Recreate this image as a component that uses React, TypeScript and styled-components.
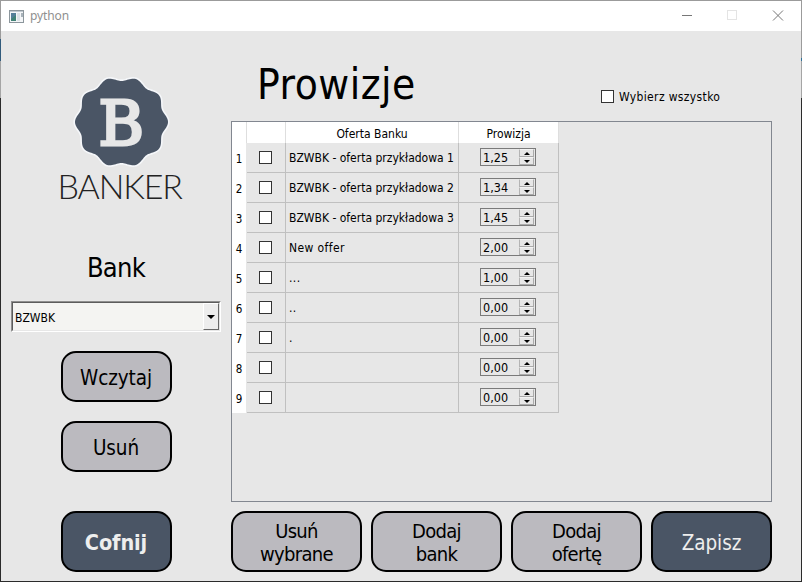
import React from "react";
import styled, { createGlobalStyle, css } from "styled-components";

const GlobalStyle = createGlobalStyle`
  * { box-sizing: border-box; }
  html, body { margin: 0; padding: 0; }
  body {
    font-family: "DejaVu Sans Condensed", "DejaVu Sans", sans-serif;
    font-stretch: condensed;
    font-size: 12px;
    color: #000;
    overflow: hidden;
  }
`;

const Frame = styled.div`
  display: grid;
  grid-template-columns: 1px 800px 1px;
  grid-template-rows: 1px 580px 1px;
  width: 802px;
  height: 582px;
  background: #2b2b2b;
`;

const TopEdge = styled.div`
  grid-column: 1 / 4;
  background: #9b9b9b;
`;

const Edge = styled.div<{ $fill: string }>`
  background: ${(p) => p.$fill};
`;

const Window = styled.div`
  display: flex;
  flex-direction: column;
  background: #e7e7e7;
`;

const TitleBar = styled.header`
  display: flex;
  align-items: center;
  height: 30px;
  padding: 0 17px 0 8px;
  background: #fff;
`;

const Title = styled.span`
  flex: 1;
  margin-left: 6px;
  font: 12px/16px "Noto Sans", sans-serif;
  letter-spacing: -0.1px;
  color: #909090;
`;

const Controls = styled.div`
  display: flex;
  gap: 34px;
`;

const Body = styled.main`
  display: flex;
  gap: 10px;
  flex: 1;
  padding-left: 10px;
`;

const Sidebar = styled.aside`
  display: flex;
  flex-direction: column;
  align-items: center;
  width: 210px;
`;

const LogoDrawing = styled.svg`
  display: block;
  width: 130px;
  height: 134px;
  margin: 40px 0 0 10px;
`;

const BankHeading = styled.h2`
  margin: 46px 0 0;
  height: 34px;
  font-size: 27px;
  line-height: 34px;
  font-weight: 400;
  letter-spacing: -0.7px;
`;

const Combo = styled.div`
  display: flex;
  width: 210px;
  height: 31px;
  margin-top: 16px;
  border: 1px solid;
  border-color: #8f8f8f #fff #fff #8f8f8f;
  background: #f4f4f2;
`;

const ComboInner = styled.div`
  display: flex;
  flex: 1;
  border: 1px solid;
  border-color: #5c5c5c #e3e3e3 #e7e7e7 #5c5c5c;
`;

const ComboText = styled.span`
  flex: 1;
  padding: 1px 2px 0;
  line-height: 28px;
`;

const ComboArrow = styled.span`
  display: flex;
  align-items: center;
  justify-content: center;
  width: 16px;
  border: 1px solid;
  border-color: #fff #686868 #686868 #fff;
  background: #ededed;
`;

const PushButton = styled.button<{ $w: number; $h: number; $dark?: boolean; $bold?: boolean; $double?: boolean; $top?: number }>`
  display: flex;
  align-items: center;
  justify-content: center;
  flex: none;
  width: ${(p) => p.$w}px;
  height: ${(p) => p.$h}px;
  margin: ${(p) => p.$top ?? 0}px 0 0;
  padding: 3px 0 0;
  border: 2px solid #000;
  border-radius: 15px;
  background: #bbbabf;
  color: #000;
  font: inherit;
  font-size: 20.5px;
  font-stretch: condensed;
  line-height: 23px;
  letter-spacing: -0.1px;
  white-space: pre-line;
  ${(p) => p.$double && css`font-size: 20px; letter-spacing: -0.7px;`}
  ${(p) => p.$dark && css`background: #4a5565; color: #eee;`}
  ${(p) => p.$bold && css`font-weight: 700; font-size: 21.5px; padding-top: 1px;`}
`;

const Content = styled.section`
  display: flex;
  flex-direction: column;
  width: 541px;
`;

const TopRow = styled.div`
  display: flex;
  height: 90px;
`;

const PageTitle = styled.h1`
  width: 370px;
  margin: 0;
  padding: 27px 0 0 26px;
  font-size: 42px;
  line-height: 54px;
  font-weight: 400;
  letter-spacing: 0.5px;
`;

const SelectAll = styled.label`
  display: flex;
  align-items: center;
  gap: 5px;
  height: 17px;
  margin-top: 57px;
  letter-spacing: 0.35px;
`;

const CheckBox = styled.span`
  flex: none;
  width: 13px;
  height: 13px;
  border: 1px solid #333;
  background: #fff;
`;

const TableFrame = styled.div`
  height: 381px;
  border: 1px solid #828790;
`;

const Grid = styled.div`
  display: grid;
  grid-template-columns: 15px 39px 173px 100px;
  grid-template-rows: 21px;
  grid-auto-rows: 30px;
  width: 327px;
`;

const HeaderCell = styled.div`
  padding-top: 2px;
  background: #fff;
  border-right: 1px solid #dedede;
  text-align: center;
  line-height: 20px;
  font-size: 12px;
`;

const RowNumber = styled.div`
  background: #fff;
  padding-top: 1px;
  text-align: center;
  line-height: 30px;
  font-size: 11.5px;
  border-right: 1px solid #e7e7e7;
`;

const Cell = styled.div<{ $center?: boolean; $spread?: boolean }>`
  display: flex;
  align-items: center;
  justify-content: ${(p) => (p.$center ? "center" : "flex-start")};
  padding: ${(p) => (p.$center ? "0 1px 0 0" : "0 0 0 3px")};
  border: 0 solid #c0c0c0;
  border-width: 0 1px 1px 0;
  white-space: nowrap;
  letter-spacing: ${(p) => (p.$spread ? 0.4 : 0)}px;
`;

const Spin = styled.div`
  display: flex;
  width: 56px;
  height: 18px;
  margin-bottom: 1px;
  border: 1px solid #7a7a7a;
`;

const SpinValue = styled.span`
  flex: 1;
  padding-left: 2px;
  line-height: 17px;
  font-size: 12.5px;
`;

const Steps = styled.span`
  display: flex;
  flex-direction: column;
  width: 15px;
  margin-right: 1px;
`;

const Step = styled.span`
  display: flex;
  align-items: center;
  justify-content: center;
  height: 8px;
  border: 1px solid;
  border-color: #f4f4f4 #aaa #aaa #b4b4b4;
`;

const Actions = styled.footer`
  display: flex;
  gap: 9px;
  margin-top: 9px;
`;

const sealPoints = Array.from({ length: 240 }, (_, i) => {
  const t = (i / 240) * Math.PI * 2;
  const r = 44.4 - 2.1 * Math.cos(10 * t);
  return `${(65.5 + r * Math.sin(t)).toFixed(2)},${(51 - r * 0.97 * Math.cos(t)).toFixed(2)}`;
}).join(" ");

const Logo = () => (
  <LogoDrawing viewBox="0 0 130 134">
    <polygon points={sealPoints} fill="#4a5565" stroke="#f5f7fa" strokeWidth="3.2" paintOrder="stroke" />
    <text
      transform="translate(42.4 73.8)"
      fontFamily="DejaVu Serif"
      fontStretch="normal"
      fontSize="62"
      fill="#e7e7e7"
      stroke="#e7e7e7"
      strokeWidth="3"
    >B</text>
    <text x="1.5" y="128" fontFamily="Lato" fontWeight="300" fontSize="34" textLength="125.5" lengthAdjust="spacing" fill="#222">
      BANKER
    </text>
  </LogoDrawing>
);

const Triangle = ({ up, w, h }: { up?: boolean; w: number; h: number }) => (
  <svg width={w} height={h} viewBox={`0 0 ${w} ${h}`}>
    <path d={up ? `M0 ${h}L${w / 2} 0L${w} ${h}Z` : `M0 0H${w}L${w / 2} ${h}Z`} fill="#000" />
  </svg>
);

const AppIcon = () => (
  <svg width="15" height="13" viewBox="0 0 15 13">
    <rect x=".5" y=".5" width="14" height="12" fill="#f4f6f8" stroke="#8c969c" />
    <path d="M1 1.5H14" stroke="#c0c8cf" />
    <rect x="2" y="3" width="5" height="8" fill="#418276" />
    <path d="M2 3H7V5L2 9Z" fill="#557f99" />
    <rect x="8" y="3" width="3" height="8" fill="#dce2e6" />
    <rect x="12" y="3" width="2" height="4" fill="#a8b3ba" />
  </svg>
);

const rows: [string, string][] = [
  ["BZWBK - oferta przykładowa 1", "1,25"],
  ["BZWBK - oferta przykładowa 2", "1,34"],
  ["BZWBK - oferta przykładowa 3", "1,45"],
  ["New offer", "2,00"],
  ["...", "1,00"],
  ["..", "0,00"],
  [".", "0,00"],
  ["", "0,00"],
  ["", "0,00"],
];

const SpinBox = ({ value }: { value: string }) => (
  <Spin>
    <SpinValue>{value}</SpinValue>
    <Steps>
      <Step><Triangle up w={6} h={3} /></Step>
      <Step><Triangle w={6} h={3} /></Step>
    </Steps>
  </Spin>
);

export default function App() {
  return (
    <>
      <GlobalStyle />
      <Frame>
        <TopEdge />
        <Edge $fill="linear-gradient(#9b9b9b 38px, #315b7c 38px 60px, #a5a5a5 60px 97px, #2b2b2b 97px)" />
        <Window>
          <TitleBar>
            <AppIcon />
            <Title>python</Title>
            <Controls>
              <svg width="12" height="12" viewBox="0 0 12 12"><path d="M2 5.5H12" stroke="#777" /></svg>
              <svg width="12" height="12" viewBox="0 0 12 12"><rect x="1.5" y=".5" width="9" height="9" fill="none" stroke="#e4e4e4" /></svg>
              <svg width="12" height="12" viewBox="0 0 12 12"><path d="M1 .5L11 10.5M11 .5L1 10.5" stroke="#777" /></svg>
            </Controls>
          </TitleBar>
          <Body>
            <Sidebar>
              <Logo />
              <BankHeading>Bank</BankHeading>
              <Combo>
                <ComboInner>
                  <ComboText>BZWBK</ComboText>
                  <ComboArrow><Triangle w={8} h={4} /></ComboArrow>
                </ComboInner>
              </Combo>
              <PushButton $w={111} $h={51} $top={19}>Wczytaj</PushButton>
              <PushButton $w={111} $h={51} $top={19}>Usuń</PushButton>
              <PushButton $w={111} $h={61} $top={39} $dark $bold>Cofnij</PushButton>
            </Sidebar>
            <Content>
              <TopRow>
                <PageTitle>Prowizje</PageTitle>
                <SelectAll><CheckBox />Wybierz wszystko</SelectAll>
              </TopRow>
              <TableFrame>
                <Grid>
                  <HeaderCell />
                  <HeaderCell />
                  <HeaderCell>Oferta Banku</HeaderCell>
                  <HeaderCell>Prowizja</HeaderCell>
                  {rows.map(([name, value], i) => (
                    <React.Fragment key={i}>
                      <RowNumber>{i + 1}</RowNumber>
                      <Cell $center><CheckBox /></Cell>
                      <Cell $spread={name.length < 12}>{name}</Cell>
                      <Cell $center><SpinBox value={value} /></Cell>
                    </React.Fragment>
                  ))}
                </Grid>
              </TableFrame>
              <Actions>
                <PushButton $w={131} $h={61} $double>{"Usuń\nwybrane"}</PushButton>
                <PushButton $w={131} $h={61} $double>{"Dodaj\nbank"}</PushButton>
                <PushButton $w={131} $h={61} $double>{"Dodaj\nofertę"}</PushButton>
                <PushButton $w={121} $h={61} $dark>Zapisz</PushButton>
              </Actions>
            </Content>
          </Body>
        </Window>
        <Edge $fill="linear-gradient(#9b9b9b 57px, #2d7098 57px 60px, #a5a5a5 60px 97px, #2b2b2b 97px)" />
      </Frame>
    </>
  );
}
